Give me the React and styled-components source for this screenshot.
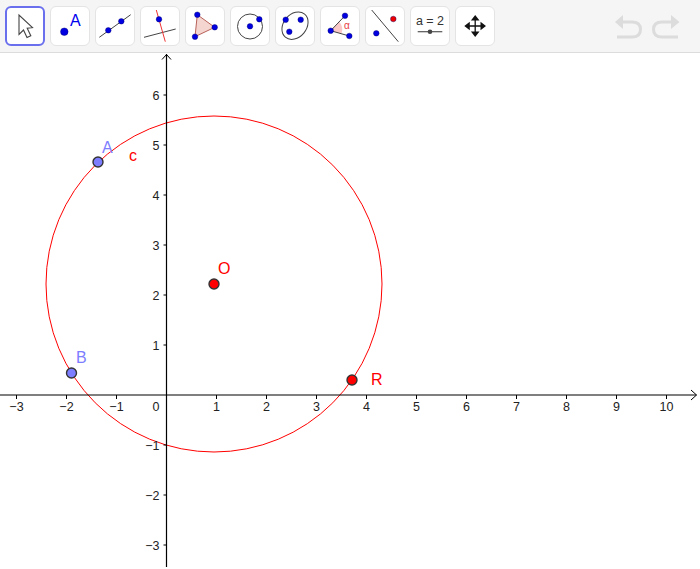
import React from 'react'
import styled, { createGlobalStyle } from 'styled-components'

const GlobalStyle = createGlobalStyle`
html, body {
    margin: 0;
    padding: 0;
    background: #fff;
    font-family: "Liberation Sans", Arial, sans-serif;
}
`
const Page = styled.div`
width: 700px;
height: 569px;
display: flex;
flex-direction: column;
overflow: hidden;
background: #fff;
`
const Toolbar = styled.div`
height: 53px;
flex-shrink: 0;
display: flex;
align-items: flex-start;
gap: 5px;
padding: 6px 0 0 5px;
box-sizing: border-box;
background: #f5f5f5;
border-bottom: 1px solid #dcdcdc;
`
const ToolButton = styled.div`
width: 40px;
height: 40px;
box-sizing: border-box;
flex-shrink: 0;
background: #fff;
border-radius: 6px;
border: ${p => (p.$active ? '2px solid #6a6fee' : '1px solid #e4e4e4')};
display: flex;
`
const ToolIcon = styled.svg`
display: block;
width: 40px;
height: 40px;
flex-shrink: 0;
margin: ${p => (p.$active ? '-2px' : '-1px')};
`
const History = styled.div`
margin-left: auto;
display: flex;
gap: 10px;
padding: 8px 20px 0 0;
`
const HistoryIcon = styled.svg`
display: block;
width: 28px;
height: 26px;
fill: none;
stroke: #dcdcdc;
stroke-width: 3;
`
const Board = styled.svg`
display: block;
flex: 1;
width: 700px;
`
const Axis = styled.path`
fill: none;
stroke: #000;
stroke-width: ${p => p.$w || 1.2};
`
const Tick = styled.text`
font-family: "Liberation Sans", Arial, sans-serif;
font-size: 12.5px;
fill: #222;
`
const Label = styled.text`
font-family: "Liberation Sans", Arial, sans-serif;
font-size: 16px;
fill: ${p => p.$color};
`
const Curve = styled.circle`
fill: none;
stroke: #ff0000;
stroke-width: 1;
`
const Point = styled.circle`
fill: ${p => p.$color};
stroke: #333;
stroke-width: 1.4;
`
const Dot = styled.circle`
fill: ${p => p.$color || '#0000e0'};
stroke: #00006a;
stroke-width: 0.4;
`
const IconText = styled.text`
font-family: "Liberation Sans", Arial, sans-serif;
font-size: ${p => p.$size}px;
fill: ${p => p.$color};
`

const I = ({ children, active }) => (
    <ToolButton $active={active}>
        <ToolIcon $active={active} viewBox="0 0 40 40">{children}</ToolIcon>
    </ToolButton>
)

const OFFSET_Y = 53
const originX = 166.5
const originY = 395 - OFFSET_Y
const unit = 50
const xTicks = [-3, -2, -1, 1, 2, 3, 4, 5, 6, 7, 8, 9, 10]
const yTicks = [-3, -2, -1, 1, 2, 3, 4, 5, 6]
const fmt = n => (n < 0 ? '\u2212' + -n : '' + n)

const App = () => {
    return (
        <Page>
            <GlobalStyle />
            <Toolbar>
                <I active>
                    <path d="M14 9 L14 28.5 L18.5 24 L22 31.5 L25.8 29.8 L22.2 22.3 L27.5 21.7 Z" fill="#fff" stroke="#444" strokeWidth="1.1" />
                </I>
                <I>
                    <Dot cx="14.3" cy="25.7" r="3.8" />
                    <IconText x="20" y="19.5" $size={16} $color="#0000ee">A</IconText>
                </I>
                <I>
                    <line x1="4.3" y1="31.3" x2="35.7" y2="8.7" stroke="#444" />
                    <Dot cx="13.3" cy="24.3" r="2.8" />
                    <Dot cx="26.3" cy="15.3" r="2.8" />
                </I>
                <I>
                    <line x1="4" y1="31.3" x2="35.7" y2="23" stroke="#444" />
                    <line x1="16.3" y1="4" x2="25.3" y2="35.7" stroke="#ee3333" />
                    <Dot cx="19" cy="13.3" r="2.8" />
                </I>
                <I>
                    <path d="M12.3 8.7 L29.7 21.3 L10 30.7 Z" fill="#f5d5cf" stroke="#b8625a" />
                    <Dot cx="12.3" cy="8.7" r="2.8" />
                    <Dot cx="29.7" cy="21.3" r="2.8" />
                    <Dot cx="10" cy="30.7" r="2.8" />
                </I>
                <I>
                    <circle cx="20" cy="20.5" r="12.5" fill="none" stroke="#444" />
                    <Dot cx="20" cy="20.3" r="2.8" />
                    <Dot cx="29.3" cy="13.3" r="2.8" />
                </I>
                <I>
                    <ellipse cx="20" cy="19.7" rx="15" ry="11.5" transform="rotate(-50 20 19.7)" fill="none" stroke="#444" />
                    <Dot cx="10.7" cy="13.7" r="2.8" />
                    <Dot cx="25.7" cy="13.7" r="2.8" />
                    <Dot cx="14.3" cy="25.7" r="2.8" />
                </I>
                <I>
                    <path d="M10.7 24.7 L19 15.5 A12 12 0 0 1 21.5 27.8 Z" fill="#fbc8c8" />
                    <path d="M25 9.7 L10.7 24.7 L29.3 30" fill="none" stroke="#444" />
                    <Dot cx="25" cy="9.7" r="2.8" />
                    <Dot cx="10.7" cy="24.7" r="2.8" />
                    <Dot cx="29.3" cy="30" r="2.8" />
                    <IconText x="24" y="23" $size={10} $color="#e84040">α</IconText>
                </I>
                <I>
                    <line x1="6.7" y1="4" x2="33.3" y2="35.7" stroke="#444" />
                    <Dot cx="28.3" cy="13" r="2.8" $color="#ee0000" />
                    <Dot cx="11.3" cy="27.3" r="2.8" />
                </I>
                <I>
                    <IconText x="20" y="19" textAnchor="middle" $size={12.5} $color="#333">a = 2</IconText>
                    <line x1="7.7" y1="25.7" x2="32.3" y2="25.7" stroke="#555" strokeWidth="1.2" />
                    <circle cx="20" cy="25.7" r="2.3" fill="#444" />
                </I>
                <I>
                    <path d="M20.2 12 V28 M12 20 H28.5" stroke="#111" strokeWidth="1.3" />
                    <path d="M20.2 9 L24.5 14.5 H15.9 Z M20.2 31 L24.5 25.5 H15.9 Z M9.3 20 L14.8 15.7 V24.3 Z M31 20 L25.5 15.7 V24.3 Z" fill="#111" />
                </I>
                <History>
                    <HistoryIcon viewBox="0 0 28 26">
                        <path d="M9 1 L1 8 L9 15 Z" fill="#dcdcdc" stroke="none" />
                        <path d="M8 8 H18 C24 8 26.5 11 26.5 15.5 C26.5 20 24 23 18 23 H3" />
                    </HistoryIcon>
                    <HistoryIcon viewBox="0 0 28 26">
                        <path d="M19 1 L27.5 8 L19 15 Z" fill="#dcdcdc" stroke="none" />
                        <path d="M20 8 H10 C4 8 1.5 11 1.5 15.5 C1.5 20 4 23 10 23 H26" />
                    </HistoryIcon>
                </History>
            </Toolbar>
            <Board viewBox={`0 ${OFFSET_Y} 700 516`}>
                <g transform={`translate(0 ${OFFSET_Y})`}>
                    <Curve cx="214" cy={284 - OFFSET_Y} r="168" />
                    <Axis d={`M0 ${originY} H696.5`} />
                    <Axis d={`M${originX} 1 V514`} />
                    <Axis $w={1} d={`M691 ${originY - 5} L696.5 ${originY} L691 ${originY + 5}`} />
                    <Axis $w={1} d={`M${originX - 4.5} 6.5 L${originX} 1.5 L${originX + 4.5} 6.5`} />
                    {xTicks.map(n => (
                        <React.Fragment key={n}>
                            <Axis $w={1} d={`M${originX + n * unit} ${originY} v4`} />
                            <Tick x={originX + n * unit} y={originY + 16} textAnchor="middle">{fmt(n)}</Tick>
                        </React.Fragment>
                    ))}
                    <Tick x="159.5" y={originY + 16} textAnchor="end">0</Tick>
                    {yTicks.map(n => (
                        <React.Fragment key={n}>
                            <Axis $w={1} d={`M${originX} ${originY - n * unit} h-3`} />
                            <Tick x="159.5" y={originY - n * unit + 5} textAnchor="end">{fmt(n)}</Tick>
                        </React.Fragment>
                    ))}
                    <Point cx="98" cy={162 - OFFSET_Y} r="5" $color="#7d7dff" />
                    <Point cx="71.5" cy={373 - OFFSET_Y} r="5" $color="#7d7dff" />
                    <Point cx="214" cy={284 - OFFSET_Y} r="5" $color="#ff0000" />
                    <Point cx="352" cy={380 - OFFSET_Y} r="5" $color="#ff0000" />
                    <Label x="102" y={152.5 - OFFSET_Y} $color="#7d7dff">A</Label>
                    <Label x="76" y={363 - OFFSET_Y} $color="#7d7dff">B</Label>
                    <Label x="218" y={273.5 - OFFSET_Y} $color="#ff0000">O</Label>
                    <Label x="371" y={385 - OFFSET_Y} $color="#ff0000">R</Label>
                    <Label x="129" y={161 - OFFSET_Y} $color="#ff0000">c</Label>
                </g>
            </Board>
        </Page>
    )
}

export default App
